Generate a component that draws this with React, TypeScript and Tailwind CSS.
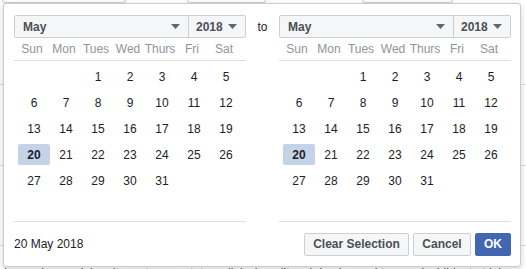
import { Fragment } from 'react';

const days: (number | null)[] = [null, null, ...Array.from({ length: 31 }, (_, i) => i + 1)];
const dayNames = ['Sun', 'Mon', 'Tues', 'Wed', 'Thurs', 'Fri', 'Sat'];

function Caret() {
  return (
    <svg width="9" height="5" viewBox="0 0 9 5" className="shrink-0">
      <path d="M0 0h9L4.5 5z" fill="#606770" />
    </svg>
  );
}

function Calendar() {
  return (
    <div className="w-[232px]">
      {/* Month / year selects */}
      <div className="flex h-[23px] rounded-[2px] border border-[#ccd0d5] bg-[#f5f6f7] text-[12px] font-bold text-[#4b4f56]">
        <div className="flex flex-1 items-center justify-between pl-[8px] pr-[8px]">
          <span>May</span>
          <Caret />
        </div>
        <div className="flex w-[57px] items-center gap-[5px] border-l border-[#ccd0d5] pl-[7px]">
          <span>2018</span>
          <Caret />
        </div>
      </div>

      {/* Day names */}
      <div className="h-[23px] border-b border-[#dddfe2]">
        <div className="ml-[2px] grid h-full grid-cols-[repeat(7,32px)] items-center text-[12px] text-[#90949c]">
          {dayNames.map((d) => (
            <span key={d} className="text-center">{d}</span>
          ))}
        </div>
      </div>

      {/* Dates */}
      <div className="h-[161px] border-b border-[#dddfe2] pt-[5px]">
        <div className="ml-[4px] grid grid-cols-[repeat(7,32px)] gap-y-[5px] text-[12px] text-[#1d2129]">
          {days.map((d, idx) => (
            <Fragment key={idx}>
              {d === null ? (
                <span className="h-[21px]" />
              ) : (
                <span
                  className={
                    d === 20
                      ? 'flex h-[21px] items-center justify-center rounded-[2px] bg-[#c5d3e8] font-bold'
                      : 'flex h-[21px] items-center justify-center'
                  }
                >
                  {d}
                </span>
              )}
            </Fragment>
          ))}
        </div>
      </div>
    </div>
  );
}

export default function App() {
  return (
    <div className="relative h-[269px] w-[526px] overflow-hidden bg-white font-['Liberation_Sans',Arial,sans-serif]">
      {/* Page underneath */}
      <div className="flex h-[3px]">
        <div className="ml-[2px] w-[124px] rounded-b-[3px] border-x border-b border-[#ccd0d5]" />
        <div className="ml-[61px] w-[79px] rounded-b-[3px] border-x border-b border-[#ccd0d5]" />
        <div className="ml-[96px] w-[91px] rounded-b-[3px] border-x border-b border-[#ccd0d5]" />
      </div>
      <div className="flex h-[262px] flex-col text-[13px] font-bold text-[#1d2129]">
        <div className="h-[82px] border-b border-[#dddfe2]" />
        <div className="-ml-[6px] mt-[18px] leading-none">t</div>
        <div className="h-[50px] border-b border-[#dddfe2]" />
        <div className="-ml-[6px] mt-[22px] leading-none">t</div>
        <div className="h-[45px] border-b border-[#dddfe2]" />
      </div>
      <div className="mt-[1px] whitespace-nowrap pl-[4px] text-[12px] leading-[14px] text-[#4b4f56]">
        Lorem ipsum dolor sit amet consectetur adipiscing elit sed do eiusmod tempor incididunt ut labore et dolore magna
      </div>

      {/* Date range popover */}
      <div className="absolute left-[3px] top-[3px] flex h-[264px] w-[518px] flex-col rounded-[3px] border border-[#c9ccd1] bg-white shadow-[0_2px_6px_rgba(0,0,0,0.18)]">
        <div className="flex pl-[10px] pr-[9px] pt-[11px]">
          <Calendar />
          <div className="flex h-[23px] w-[33px] items-center justify-center text-[12px] text-[#1d2129]">to</div>
          <Calendar />
        </div>
        <div className="flex h-[44px] items-center justify-between pl-[10px] pr-[9px]">
          <span className="text-[12px] text-[#1d2129]">20 May 2018</span>
          <div className="flex gap-[4px] text-[12px] font-bold">
            <button className="flex h-[23px] w-[105px] items-center justify-center rounded-[2px] border border-[#ccd0d5] bg-[#f5f6f7] text-[#4b4f56]">
              Clear Selection
            </button>
            <button className="flex h-[23px] w-[58px] items-center justify-center rounded-[2px] border border-[#ccd0d5] bg-[#f5f6f7] text-[#4b4f56]">
              Cancel
            </button>
            <button className="flex h-[23px] w-[36px] items-center justify-center rounded-[2px] border border-[#4267b2] bg-[#4267b2] text-white">
              OK
            </button>
          </div>
        </div>
      </div>
    </div>
  );
}
